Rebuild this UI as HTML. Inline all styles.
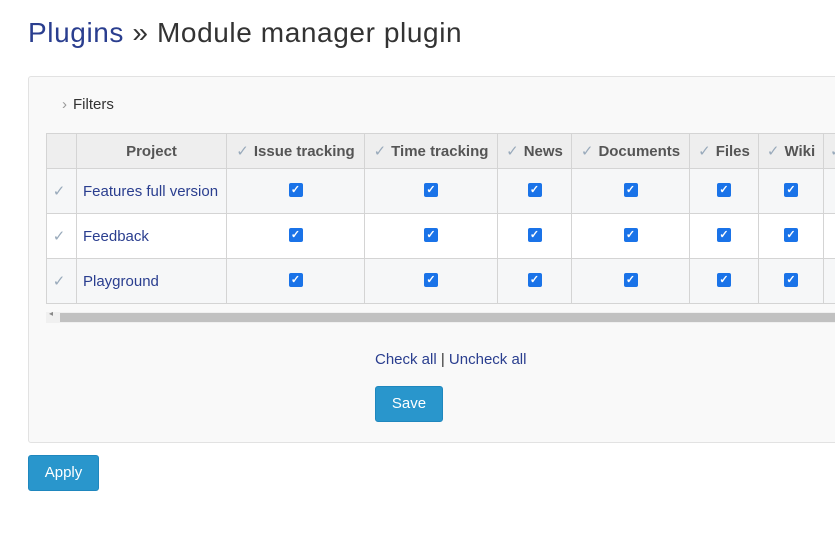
<!DOCTYPE html>
<html><head><style>
body{margin:0;background:#fff;font-family:"Liberation Sans",sans-serif;width:835px;height:551px;overflow:hidden;position:relative;color:#333}
h2{position:absolute;left:28px;top:17px;margin:0;font-weight:normal;font-size:28px;color:#333;letter-spacing:0.6px}
h2 a{color:#2a3e8f}
.box{position:absolute;left:28px;top:76px;width:830px;height:365px;background:#f9f9f9;border:1px solid #e2e2e2;border-radius:3px}
.filt{position:absolute;left:62px;top:96px;font-size:15px;color:#333}
.filt span{color:#999;margin-right:6px}
table{position:absolute;left:46px;top:133px;border-collapse:collapse;font-size:15px;table-layout:fixed;width:820px}
td,th{border:1px solid #d4d4d4;padding:0;text-align:center;white-space:nowrap;overflow:hidden}
th{background:#eeeeee;height:34px;color:#555;font-weight:bold}
td{height:44px}
tr.o td{background:#f6f7f8}
tr.e td{background:#fff}
.ck{color:#9ab;font-weight:normal;margin-right:5px}
td.p{text-align:left;padding-left:6px;color:#2a3e8f}
.cb{display:inline-block;width:14px;height:14px;background:#1a73e8;border-radius:2px;color:#fff;font-size:11px;line-height:14px;font-weight:bold;vertical-align:3px}
.sb{position:absolute;left:46px;top:312px;width:800px;height:11px;background:#f0f0f0}
.sb div{position:absolute;left:14px;top:1px;right:0;height:9px;background:#c1c1c1}
.links{position:absolute;left:375px;top:351px;font-size:15px;color:#2a3e8f}
.btn{position:absolute;background:#2996cc;color:#fff;border-radius:3px;font-size:15px;text-align:center;border:1px solid #1f87be}
</style></head><body>
<h2><a>Plugins</a> » Module manager plugin</h2>
<div class="box"></div>
<div class="filt"><span>›</span>Filters</div>
<table>
<colgroup><col style="width:30px"><col style="width:150px"><col style="width:138px"><col style="width:133px"><col style="width:74px"><col style="width:118px"><col style="width:69px"><col style="width:65px"><col style="width:43px"></colgroup>
<tr><th></th><th>Project</th><th><span class="ck">✓</span>Issue tracking</th><th><span class="ck">✓</span>Time tracking</th><th><span class="ck">✓</span>News</th><th><span class="ck">✓</span>Documents</th><th><span class="ck">✓</span>Files</th><th><span class="ck">✓</span>Wiki</th><th style="text-align:left;padding-left:6px"><span class="ck">✓</span></th></tr>
<tr class="o"><td><span class="ck">✓</span></td><td class="p">Features full version</td><td><span class="cb">✓</span></td><td><span class="cb">✓</span></td><td><span class="cb">✓</span></td><td><span class="cb">✓</span></td><td><span class="cb">✓</span></td><td><span class="cb">✓</span></td><td></td></tr>
<tr class="e"><td><span class="ck">✓</span></td><td class="p">Feedback</td><td><span class="cb">✓</span></td><td><span class="cb">✓</span></td><td><span class="cb">✓</span></td><td><span class="cb">✓</span></td><td><span class="cb">✓</span></td><td><span class="cb">✓</span></td><td></td></tr>
<tr class="o"><td><span class="ck">✓</span></td><td class="p">Playground</td><td><span class="cb">✓</span></td><td><span class="cb">✓</span></td><td><span class="cb">✓</span></td><td><span class="cb">✓</span></td><td><span class="cb">✓</span></td><td><span class="cb">✓</span></td><td></td></tr>
</table>
<div class="sb"><span style="position:absolute;left:3px;top:-3px;font-size:8px;color:#888">◂</span><div></div></div>
<div class="links">Check all <span style="color:#333">|</span> Uncheck all</div>
<div class="btn" style="left:375px;top:386px;width:66px;height:34px;line-height:34px">Save</div>
<div class="btn" style="left:28px;top:455px;width:69px;height:34px;line-height:34px">Apply</div>
</body></html>
